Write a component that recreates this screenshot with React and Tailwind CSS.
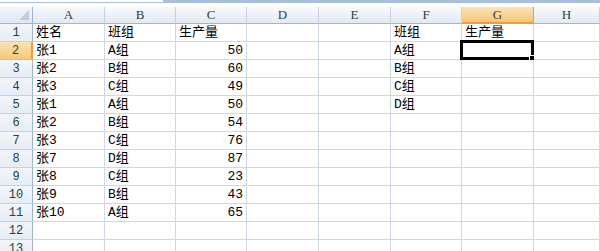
import React from 'react';

const COLS = [
  { id: 'A', w: 'w-[72px]' },
  { id: 'B', w: 'w-[71px]' },
  { id: 'C', w: 'w-[71px]' },
  { id: 'D', w: 'w-[72px]' },
  { id: 'E', w: 'w-[72px]' },
  { id: 'F', w: 'w-[71px]' },
  { id: 'G', w: 'w-[72px]' },
  { id: 'H', w: 'w-[66px]' },
];

// cell contents keyed by column letter
const DATA = {
  1: { A: '姓名', B: '班组', C: '生产量', F: '班组', G: '生产量' },
  2: { A: '张1', B: 'A组', C: 50, F: 'A组' },
  3: { A: '张2', B: 'B组', C: 60, F: 'B组' },
  4: { A: '张3', B: 'C组', C: 49, F: 'C组' },
  5: { A: '张1', B: 'A组', C: 50, F: 'D组' },
  6: { A: '张2', B: 'B组', C: 54 },
  7: { A: '张3', B: 'C组', C: 76 },
  8: { A: '张7', B: 'D组', C: 87 },
  9: { A: '张8', B: 'C组', C: 23 },
  10: { A: '张9', B: 'B组', C: 43 },
  11: { A: '张10', B: 'A组', C: 65 },
  12: {},
  13: {},
};

const FONT = "font-['Liberation_Mono','Noto_Sans_CJK_SC',monospace]";

function ColHeader({ id, w }) {
  const active = id === 'G';
  return (
    <div
      className={`${w} h-[17px] shrink-0 flex items-center justify-center border-r text-[13px] font-['Liberation_Serif',serif] ${
        active
          ? 'bg-gradient-to-b from-[#fbe3b4] to-[#f5c876] border-[#f29a3c] border-b-[2px] border-b-[#f29a3c] text-[#3c3c3c]'
          : 'bg-gradient-to-b from-[#f7f9fc] to-[#e3eaf4] border-[#c5d2e2] border-b border-b-[#9eb6ce] text-[#27413e]'
      }`}
    >
      {id}
    </div>
  );
}

function Row({ n }) {
  const active = n === 2;
  const row = DATA[n];
  return (
    <div className="flex h-[18px]">
      <div
        className={`w-[33px] shrink-0 flex items-center justify-center border-b text-[12px] ${
          active
            ? 'bg-gradient-to-b from-[#fbe3b4] to-[#f5c876] border-r-[2px] border-r-[#f29a3c] border-b-[#f2b96e] text-[#3c3c3c]'
            : 'bg-gradient-to-b from-[#f3f6fb] to-[#e6edf6] border-r border-r-[#9eb6ce] border-b-[#c5d2e2] text-[#27413e]'
        }`}
      >
        {n}
      </div>
      {COLS.map(({ id, w }) => {
        const v = row[id];
        const isNum = typeof v === 'number';
        return (
          <div
            key={id}
            className={`${w} shrink-0 relative flex items-center px-[3px] border-r border-b border-[#d0d7e5] text-[13px] text-black leading-none whitespace-nowrap ${
              isNum ? 'justify-end' : 'justify-start'
            }`}
          >
            {v}
            {n === 2 && id === 'G' && (
              <div className="absolute -left-[2px] -top-[2px] -right-[1px] -bottom-[1px] border-[3px] border-black">
                <div className="absolute -right-[4px] -bottom-[4px] w-[6px] h-[6px] bg-black border border-white" />
              </div>
            )}
          </div>
        );
      })}
    </div>
  );
}

export default function App() {
  return (
    <div className={`w-[600px] h-[251px] overflow-hidden bg-white ${FONT}`}>
      {/* ── formula bar remnant ── */}
      <div className="flex h-[7px]">
        <div className="w-[163px] h-[3px] bg-white border-b border-[#a7bdd8]" />
        <div className="flex-1 h-[3px] bg-[#a9c0dc]" />
      </div>

      {/* ── column headers ── */}
      <div className="flex">
        <div className="w-[33px] h-[17px] shrink-0 relative bg-gradient-to-b from-[#f3f6fb] to-[#dfe7f2] border-r border-b border-[#9eb6ce]">
          <div className="absolute right-[3px] bottom-[3px] w-0 h-0 border-l-[10px] border-l-transparent border-b-[10px] border-b-[#bfcde0]" />
        </div>
        {COLS.map(c => <ColHeader key={c.id} {...c} />)}
      </div>

      {/* ── rows ── */}
      {Object.keys(DATA).map(n => <Row key={n} n={Number(n)} />)}
    </div>
  );
}
